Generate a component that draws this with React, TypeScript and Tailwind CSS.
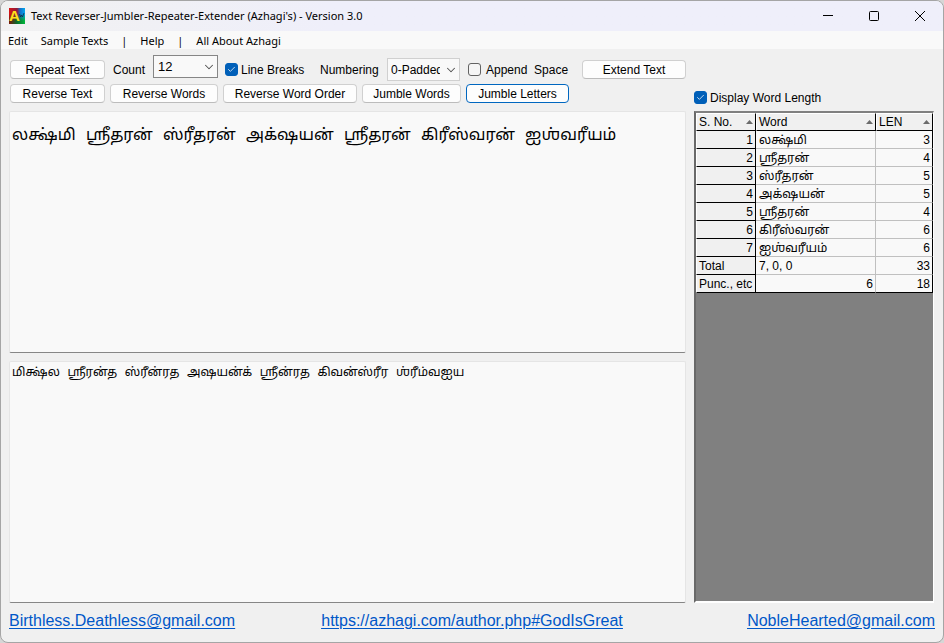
import React, { useState } from 'react';
import { ChevronDown, Check } from 'lucide-react';

const MENU = ['Edit', 'Sample Texts', '|', 'Help', '|', 'All About Azhagi'];

// \u200c keeps the consonants apart where the ligature is not wanted
const WORDS = [
  { word: 'லக்ஷ்மி', len: 3 },
  { word: 'ஶ்ரீதரன்', len: 4 },
  { word: 'ஸ்\u200cரீதரன்', len: 5 },
  { word: 'அக்\u200cஷயன்', len: 5 },
  { word: 'ஶ்ரீதரன்', len: 4 },
  { word: 'கிரீஸ்\u200cவரன்', len: 6 },
  { word: 'ஐஶ்வரீயம்', len: 6 },
];

const JUMBLED = [
  'மிக்ஷ்ல',
  'ஶ்ரீரன்த',
  'ஸ்\u200cரீன்ரத',
  'அஷயன்க்',
  'ஶ்ரீன்ரத',
  'கிவன்ஸ்\u200cரீர',
  'ஶ்\u200cரீம்வஐய',
];

type ButtonProps = {
  children: React.ReactNode;
  className?: string;
  active?: boolean;
};

const ToolButton: React.FC<ButtonProps> = ({ children, className = '', active }) => (
  <button
    type="button"
    className={`h-[19px] shrink-0 rounded-[4px] border bg-[#fdfdfd] text-center leading-4 whitespace-nowrap ${
      active ? 'border-[#0067c0]' : 'border-[#d0d0d0] border-b-[#bcbcbc]'
    } ${className}`}
  >
    {children}
  </button>
);

type CheckProps = {
  label: string;
  defaultChecked?: boolean;
  className?: string;
};

const CheckField: React.FC<CheckProps> = ({ label, defaultChecked, className = 'gap-[3px]' }) => (
  <label className={`flex shrink-0 items-center whitespace-pre ${className}`}>
    <span className="relative flex size-[13px]">
      <input
        type="checkbox"
        defaultChecked={defaultChecked}
        className="peer size-[13px] appearance-none rounded-[3px] border border-[#626262] bg-[#f5f5f5] checked:border-[#005fb8] checked:bg-[#005fb8]"
      />
      <Check
        size={9}
        strokeWidth={2}
        className="pointer-events-none absolute top-0.5 left-0.5 hidden text-white peer-checked:block"
      />
    </span>
    {label}
  </label>
);

type SelectProps = {
  id: string;
  options: string[];
  className?: string;
  wrapperClass?: string;
};

const SelectField: React.FC<SelectProps> = ({ id, options, className = '', wrapperClass = '' }) => (
  <div className={`relative h-[23px] shrink-0 ${wrapperClass}`}>
    <select id={id} className={`h-full w-full appearance-none border bg-[#f9f9f9] pr-[19px] ${className}`}>
      {options.map((o) => (
        <option key={o}>{o}</option>
      ))}
    </select>
    <ChevronDown
      size={14}
      strokeWidth={1.75}
      className="pointer-events-none absolute top-[5px] right-0.5 text-[#505050]"
    />
  </div>
);

const AppIcon = () => (
  <svg width="16" height="16" viewBox="0 0 16 16" aria-hidden="true">
    <defs>
      <linearGradient id="iconTop" x1="0" x2="1" y1="0" y2="0">
        <stop offset="0" stopColor="#d81313" />
        <stop offset="0.5" stopColor="#8c1a3c" />
        <stop offset="0.7" stopColor="#1470c8" />
        <stop offset="1" stopColor="#00a8f0" />
      </linearGradient>
      <linearGradient id="iconBottom" x1="0" x2="1" y1="0" y2="0">
        <stop offset="0" stopColor="#7a1608" />
        <stop offset="0.5" stopColor="#0b6b2c" />
        <stop offset="1" stopColor="#00b83c" />
      </linearGradient>
      <linearGradient id="iconFade" x1="0" x2="0" y1="0" y2="1">
        <stop offset="0.35" stopColor="#fff" stopOpacity="0" />
        <stop offset="0.8" stopColor="#fff" />
      </linearGradient>
      <mask id="iconMask">
        <rect width="16" height="16" fill="url(#iconFade)" />
      </mask>
    </defs>
    <rect width="16" height="16" fill="url(#iconTop)" />
    <rect width="16" height="16" fill="url(#iconBottom)" mask="url(#iconMask)" />
    <path d="M10.5 6l1 3 1-2 1 2 1.5-4" fill="none" stroke="#10204c" strokeWidth="0.75" />
    <text x="0" y="13" fontSize="15" fontWeight="700" fontFamily="Liberation Sans" fill="#ffe11a">
      A
    </text>
  </svg>
);

const TitleBar = () => (
  <header className="flex h-[30px] items-center bg-linear-to-r from-[#f1f1f1] to-[#efeffa] to-35% pl-2">
    <AppIcon />
    <h1 className="ml-1.5 flex-1 font-['Noto_Sans',sans-serif] text-[11px] whitespace-nowrap">
      Text Reverser-Jumbler-Repeater-Extender (Azhagi's) - Version 3.0
    </h1>
    <button type="button" aria-label="Minimize" className="grid h-full w-[46px] place-items-center">
      <svg width="10" height="10" viewBox="0 0 10 10">
        <path d="M0 4.5h10" stroke="#000" />
      </svg>
    </button>
    <button type="button" aria-label="Maximize" className="grid h-full w-[46px] place-items-center">
      <svg width="10" height="10" viewBox="0 0 10 10">
        <rect x="0.5" y="0.5" width="9" height="9" rx="1" fill="none" stroke="#000" />
      </svg>
    </button>
    <button type="button" aria-label="Close" className="grid h-full w-[46px] place-items-center">
      <svg width="10" height="10" viewBox="0 0 10 10">
        <path d="M0 0l10 10M10 0L0 10" stroke="#000" />
      </svg>
    </button>
  </header>
);

const MenuBar = () => (
  <nav className="flex h-[18px] items-center gap-[13px] bg-[#f9f9f9] pt-0.5 pl-[7px] font-['Noto_Sans',sans-serif] text-[11px] leading-4">
    {MENU.map((item, i) =>
      item === '|' ? (
        <span key={i}>|</span>
      ) : (
        <button key={i} type="button" className="whitespace-nowrap">
          {item}
        </button>
      )
    )}
  </nav>
);

const Toolbar = () => (
  <div className="mb-2 pl-px">
    <div className="flex h-[29px] items-center">
      <ToolButton className="w-[95px]">Repeat Text</ToolButton>
      <label htmlFor="count" className="ml-2 w-10 shrink-0">
        Count
      </label>
      <SelectField
        id="count"
        options={['12', '1', '2', '5', '10']}
        wrapperClass="w-[65px] self-start"
        className="border-[#868686] pl-1 text-[13px]"
      />
      <CheckField label="Line Breaks" defaultChecked className="ml-[7px] w-[95px] gap-[3px]" />
      <label htmlFor="numbering" className="w-[67px] shrink-0">
        Numbering
      </label>
      <SelectField
        id="numbering"
        options={['0-Padded', 'Plain', 'None']}
        wrapperClass="w-[73px]"
        className="border-[#d0d0d0] pl-[3px]"
      />
      <CheckField label="Append  Space" className="ml-2 gap-[5px]" />
      <ToolButton className="ml-auto w-[104px]">Extend Text</ToolButton>
    </div>
    <div className="flex gap-[5px]">
      <ToolButton className="w-[95px]">Reverse Text</ToolButton>
      <ToolButton className="w-[108px]">Reverse Words</ToolButton>
      <ToolButton className="w-[134px]">Reverse Word Order</ToolButton>
      <ToolButton className="w-[99px]">Jumble Words</ToolButton>
      <ToolButton className="w-[103px]" active>
        Jumble Letters
      </ToolButton>
    </div>
  </div>
);

const HeadCell: React.FC<{ children: React.ReactNode }> = ({ children }) => (
  <th className="border-t border-r border-b border-l border-t-white border-r-black border-b-black border-l-white bg-[#f0f0f0] pr-[2px] pl-[2px] font-normal">
    <span className="flex h-4 items-center justify-between whitespace-nowrap">
      {children}
      <svg width="7" height="4" viewBox="0 0 7 4" aria-hidden="true">
        <path d="M0 4L3.5 0 7 4z" fill="#6b6b6b" />
      </svg>
    </span>
  </th>
);

const ROW_HEAD =
  'border-r border-b border-l border-r-black border-b-black border-l-white bg-[#f0f0f0] pt-0.5 pr-[2px] pl-[2px] font-normal whitespace-nowrap';

const LengthTable = () => (
  <table className="w-full table-fixed border-separate border-spacing-0 bg-[#f9f9f9] text-left leading-[15px]">
    <colgroup>
      <col className="w-[60px]" />
      <col />
      <col className="w-[57px]" />
    </colgroup>
    <thead>
      <tr className="h-[18px]">
        <HeadCell>S. No.</HeadCell>
        <HeadCell>Word</HeadCell>
        <HeadCell>LEN</HeadCell>
      </tr>
    </thead>
    <tbody>
      {WORDS.map((row, i) => (
        <tr key={i} className="h-[18px]">
          <th className={`${ROW_HEAD} text-right`}>{i + 1}</th>
          <td className="border-r border-b border-[#c0c0c0] pt-0.5 pl-[3px] font-['Noto_Sans_Tamil',sans-serif]">
            <div className="h-[15px] leading-[17px] whitespace-nowrap">{row.word}</div>
          </td>
          <td className="border-r border-b border-r-black border-b-[#c0c0c0] pt-0.5 pr-[2px] text-right">{row.len}</td>
        </tr>
      ))}
      <tr className="h-[18px]">
        <th className={ROW_HEAD}>Total</th>
        <td className="border-r border-b border-[#c0c0c0] pt-0.5 pl-[3px]">7, 0, 0</td>
        <td className="border-r border-b border-r-black border-b-[#c0c0c0] pt-0.5 pr-[2px] text-right">33</td>
      </tr>
      <tr className="h-[18px]">
        <th className={ROW_HEAD}>Punc., etc</th>
        <td className="border-r border-b border-r-[#c0c0c0] border-b-black pt-0.5 pr-[2px] text-right">6</td>
        <td className="border-r border-b border-black pt-0.5 pr-[2px] text-right">18</td>
      </tr>
    </tbody>
  </table>
);

const AREA =
  "min-h-24 w-full resize-none rounded-[2px] border border-[#e5e5e5] border-b-[#868686] bg-[#f9f9f9] px-0.5 font-['DejaVu_Sans','Noto_Sans_Tamil',sans-serif] outline-none";

const App: React.FC = () => {
  const [source, setSource] = useState(WORDS.map((w) => w.word).join('  '));
  const [result, setResult] = useState(JUMBLED.join('  '));

  return (
    <div className="flex min-h-screen bg-[#d6d6d6]">
      <div className="flex min-w-0 flex-1 flex-col overflow-hidden rounded-lg border border-[#a5a5a5] bg-[#f0f0f0] font-['Liberation_Sans',Arial,sans-serif] text-[12px] text-black">
        <TitleBar />
        <MenuBar />
        <main className="flex flex-1 gap-2 pt-1.5 pr-[9px] pl-2">
          <section className="flex min-w-0 flex-1 flex-col">
            <Toolbar />
            <div className="grid flex-1 grid-rows-2 gap-2">
              <textarea
                aria-label="Source text"
                value={source}
                onChange={(e) => setSource(e.target.value)}
                className={`${AREA} pt-[9px] text-[16px] leading-7`}
              />
              <textarea
                aria-label="Result text"
                value={result}
                onChange={(e) => setResult(e.target.value)}
                className={`${AREA} text-[12px] leading-5`}
              />
            </div>
          </section>
          <aside className="flex w-[240px] shrink-0 flex-col pt-9">
            <CheckField label="Display Word Length" defaultChecked className="h-[13px] gap-[3px]" />
            <div className="mt-[7px] flex-1 border-t-2 border-r border-b-2 border-l-2 border-t-[#808080] border-r-white border-b-white border-l-[#696969] bg-[#808080]">
              <LengthTable />
            </div>
          </aside>
        </main>
        <footer className="grid grid-cols-[1fr_auto_1fr] px-2 pt-2 pb-[11px] text-[16px] leading-5 text-[#0057c8] underline underline-offset-2">
          <a href="mailto:Birthless.Deathless@gmail.com" className="justify-self-start">
            Birthless.Deathless@gmail.com
          </a>
          <a href="https://azhagi.com/author.php#GodIsGreat">https://azhagi.com/author.php#GodIsGreat</a>
          <a href="mailto:NobleHearted@gmail.com" className="justify-self-end">
            NobleHearted@gmail.com
          </a>
        </footer>
      </div>
    </div>
  );
};

export default App;
